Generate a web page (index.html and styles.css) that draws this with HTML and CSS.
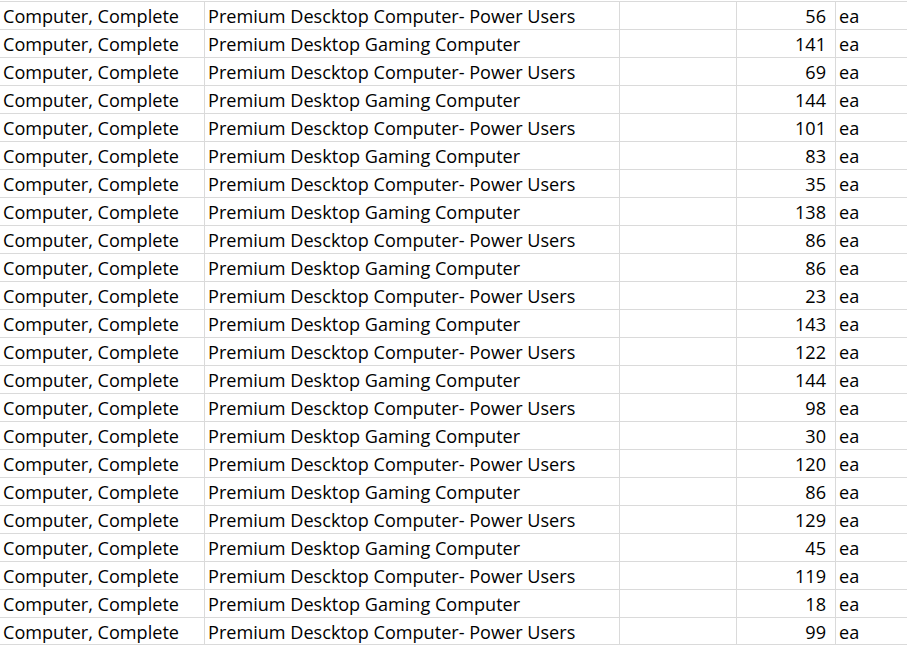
FILE: index.html
```html
<!DOCTYPE html>
<html>
<head>
<meta charset="utf-8">
<link rel="stylesheet" href="styles.css">
</head>
<body>
<div class="sheet">
<div class="row"><div class="c a">Computer, Complete</div><div class="c b">Premium Descktop Computer- Power Users</div><div class="c e"></div><div class="c n">56</div><div class="c u">ea</div></div>
<div class="row"><div class="c a">Computer, Complete</div><div class="c b">Premium Desktop Gaming Computer</div><div class="c e"></div><div class="c n">141</div><div class="c u">ea</div></div>
<div class="row"><div class="c a">Computer, Complete</div><div class="c b">Premium Descktop Computer- Power Users</div><div class="c e"></div><div class="c n">69</div><div class="c u">ea</div></div>
<div class="row"><div class="c a">Computer, Complete</div><div class="c b">Premium Desktop Gaming Computer</div><div class="c e"></div><div class="c n">144</div><div class="c u">ea</div></div>
<div class="row"><div class="c a">Computer, Complete</div><div class="c b">Premium Descktop Computer- Power Users</div><div class="c e"></div><div class="c n">101</div><div class="c u">ea</div></div>
<div class="row"><div class="c a">Computer, Complete</div><div class="c b">Premium Desktop Gaming Computer</div><div class="c e"></div><div class="c n">83</div><div class="c u">ea</div></div>
<div class="row"><div class="c a">Computer, Complete</div><div class="c b">Premium Descktop Computer- Power Users</div><div class="c e"></div><div class="c n">35</div><div class="c u">ea</div></div>
<div class="row"><div class="c a">Computer, Complete</div><div class="c b">Premium Desktop Gaming Computer</div><div class="c e"></div><div class="c n">138</div><div class="c u">ea</div></div>
<div class="row"><div class="c a">Computer, Complete</div><div class="c b">Premium Descktop Computer- Power Users</div><div class="c e"></div><div class="c n">86</div><div class="c u">ea</div></div>
<div class="row"><div class="c a">Computer, Complete</div><div class="c b">Premium Desktop Gaming Computer</div><div class="c e"></div><div class="c n">86</div><div class="c u">ea</div></div>
<div class="row"><div class="c a">Computer, Complete</div><div class="c b">Premium Descktop Computer- Power Users</div><div class="c e"></div><div class="c n">23</div><div class="c u">ea</div></div>
<div class="row"><div class="c a">Computer, Complete</div><div class="c b">Premium Desktop Gaming Computer</div><div class="c e"></div><div class="c n">143</div><div class="c u">ea</div></div>
<div class="row"><div class="c a">Computer, Complete</div><div class="c b">Premium Descktop Computer- Power Users</div><div class="c e"></div><div class="c n">122</div><div class="c u">ea</div></div>
<div class="row"><div class="c a">Computer, Complete</div><div class="c b">Premium Desktop Gaming Computer</div><div class="c e"></div><div class="c n">144</div><div class="c u">ea</div></div>
<div class="row"><div class="c a">Computer, Complete</div><div class="c b">Premium Descktop Computer- Power Users</div><div class="c e"></div><div class="c n">98</div><div class="c u">ea</div></div>
<div class="row"><div class="c a">Computer, Complete</div><div class="c b">Premium Desktop Gaming Computer</div><div class="c e"></div><div class="c n">30</div><div class="c u">ea</div></div>
<div class="row"><div class="c a">Computer, Complete</div><div class="c b">Premium Descktop Computer- Power Users</div><div class="c e"></div><div class="c n">120</div><div class="c u">ea</div></div>
<div class="row"><div class="c a">Computer, Complete</div><div class="c b">Premium Desktop Gaming Computer</div><div class="c e"></div><div class="c n">86</div><div class="c u">ea</div></div>
<div class="row"><div class="c a">Computer, Complete</div><div class="c b">Premium Descktop Computer- Power Users</div><div class="c e"></div><div class="c n">129</div><div class="c u">ea</div></div>
<div class="row"><div class="c a">Computer, Complete</div><div class="c b">Premium Desktop Gaming Computer</div><div class="c e"></div><div class="c n">45</div><div class="c u">ea</div></div>
<div class="row"><div class="c a">Computer, Complete</div><div class="c b">Premium Descktop Computer- Power Users</div><div class="c e"></div><div class="c n">119</div><div class="c u">ea</div></div>
<div class="row"><div class="c a">Computer, Complete</div><div class="c b">Premium Desktop Gaming Computer</div><div class="c e"></div><div class="c n">18</div><div class="c u">ea</div></div>
<div class="row"><div class="c a">Computer, Complete</div><div class="c b">Premium Descktop Computer- Power Users</div><div class="c e"></div><div class="c n">99</div><div class="c u">ea</div></div>
</div>
</body>
</html>
```
FILE: styles.css
```css
html, body {
  margin: 0;
  padding: 0;
  background: #ffffff;
}
.sheet {
  padding-top: 1px;
  font-family: "Open Sans", "Liberation Sans", sans-serif;
  font-size: 18.1px;
  color: #000000;
}
.row {
  display: grid;
  grid-template-columns: 205px 415px 117px 99px 1fr;
  height: 28px;
  box-sizing: border-box;
  border-top: 1px solid #dadada;
}
.row:last-child {
  border-bottom: 1px solid #dadada;
}
.c {
  border-right: 1px solid #dadada;
  box-sizing: border-box;
  white-space: nowrap;
  overflow: hidden;
  line-height: 27px;
  padding: 1px 3px 0;
}
.u {
  border-right: none;
}
.n {
  text-align: right;
  padding-right: 9px;
}
```
